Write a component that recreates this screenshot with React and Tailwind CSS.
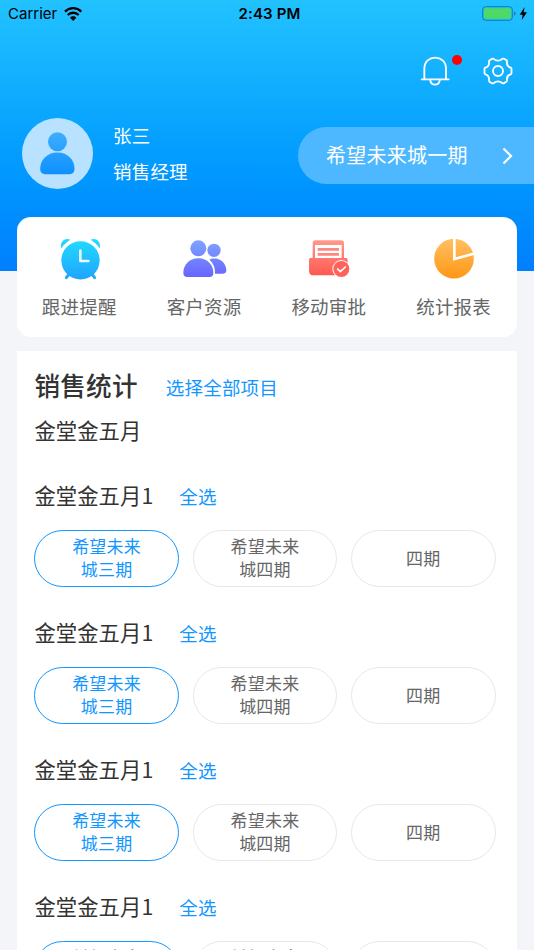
const shortcuts = [
  { key: 'remind', label: '跟进提醒', Icon: AlarmIcon },
  { key: 'customer', label: '客户资源', Icon: CustomerIcon },
  { key: 'approve', label: '移动审批', Icon: ApproveIcon },
  { key: 'report', label: '统计报表', Icon: ReportIcon },
]

const chips = [
  { id: 1, lines: ['希望未来', '城三期'], active: true },
  { id: 2, lines: ['希望未来', '城四期'] },
  { id: 3, lines: ['四期'] },
]

const groups = [1, 2, 3, 4].map((id) => ({ id, name: '金堂金五月1', chips }))

function AlarmIcon() {
  return (
    <svg className="h-[46px] w-12" viewBox="168 80 144 138">
      <defs>
        <linearGradient id="alarm" x1="0" y1="87" x2="0" y2="210" gradientUnits="userSpaceOnUse">
          <stop offset="0" stopColor="#22dcff" />
          <stop offset="1" stopColor="#20a4ff" />
        </linearGradient>
      </defs>
      <g fill="url(#alarm)">
        <path d="M184 116C179 98 194 83 211 91C203 96 191 105 186 115Z" />
        <path d="M299 116C304 98 289 83 272 91C280 96 292 105 297 115Z" />
        <circle cx="241.500" cy="153" r="57.500" />
      </g>
      <path d="M206 196L199 205M277 196L284 205" stroke="#20a8ff" strokeWidth="9" strokeLinecap="round" />
      <path d="M241 124V155H265" fill="none" stroke="#e8fbff" strokeWidth="8" strokeLinecap="round" strokeLinejoin="round" />
    </svg>
  )
}

function CustomerIcon() {
  return (
    <svg className="h-[46px] w-12" viewBox="542 80 144 138">
      <defs>
        <linearGradient id="customer" x1="0" y1="93" x2="0" y2="203" gradientUnits="userSpaceOnUse">
          <stop offset="0" stopColor="#7ea4ff" />
          <stop offset="1" stopColor="#6864ff" />
        </linearGradient>
      </defs>
      <g fill="url(#customer)">
        <circle cx="641" cy="123" r="20" />
        <path d="M627 151C634 147 645 147 653 149C669 154 678 169 678 183Q678 193 668 193H644C645 176 639 160 627 151Z" />
        <circle cx="594" cy="117" r="27" fill="#fff" />
        <circle cx="594" cy="117" r="24" />
        <path d="M594 147C622 147 639 168 639 190Q639 203 627 203H561Q549 203 549 190C549 168 566 147 594 147Z" />
      </g>
    </svg>
  )
}

function ApproveIcon() {
  return (
    <svg className="h-[46px] w-12" viewBox="115 80 144 138">
      <defs>
        <linearGradient id="approve" x1="0" y1="93" x2="0" y2="200" gradientUnits="userSpaceOnUse">
          <stop offset="0" stopColor="#ff998d" />
          <stop offset="1" stopColor="#ff574f" />
        </linearGradient>
      </defs>
      <path d="M138 147V101Q138 93 146 93H224Q232 93 232 101V147Z" fill="url(#approve)" />
      <path d="M145 147V107H225V147Z" fill="#fff" />
      <path d="M153 120H217M153 135H217" stroke="#ff877d" strokeWidth="8" />
      <path d="M131 146H239Q243 146 243 151V184Q243 198 229 198H141Q127 198 127 184V151Q127 146 131 146Z" fill="url(#approve)" />
      <circle cx="224" cy="179" r="27" fill="#fff" />
      <circle cx="224" cy="179" r="24" fill="#ff625a" />
      <path d="M213 179L221 187L236 173" fill="none" stroke="#fff" strokeWidth="5" strokeLinecap="round" strokeLinejoin="round" />
    </svg>
  )
}

function ReportIcon() {
  return (
    <svg className="h-[46px] w-12" viewBox="489.500 80 144 138">
      <defs>
        <linearGradient id="report" x1="0" y1="88" x2="0" y2="207" gradientUnits="userSpaceOnUse">
          <stop offset="0" stopColor="#ffc062" />
          <stop offset="1" stopColor="#ff9715" />
        </linearGradient>
      </defs>
      <circle cx="561.500" cy="148" r="59.500" fill="url(#report)" />
      <path d="M562.500 84V149L626 132" fill="none" stroke="#fff" strokeWidth="8" />
    </svg>
  )
}

function WifiIcon() {
  return (
    <svg className="h-[14px] w-[18px]" viewBox="194 18 54 42">
      <g fill="none" stroke="#000" strokeWidth="7">
        <path d="M197 32C211 18 232 18 246 32" />
        <path d="M205 42C214 33 229 33 238 42" />
      </g>
      <path d="M221.500 60L212 50C217 44.500 226 44.500 231 50Z" />
    </svg>
  )
}

function StatusBar() {
  return (
    <div className="grid h-7 grid-cols-3 items-center pr-[6px] pl-2 font-['Inter',sans-serif] text-black">
      <div className="flex items-center gap-[7px]">
        <span className="text-[15px]">Carrier</span>
        <WifiIcon />
      </div>
      <span className="pl-[3px] text-center text-[15px] font-semibold tracking-[0.15px]">2:43 PM</span>
      <div className="-mt-[2px] flex items-center justify-end">
        <svg className="h-[15px] w-[46px]" viewBox="645 17 138 45">
          <rect x="647" y="19" width="89" height="41" rx="9" fill="none" stroke="#157da8" strokeWidth="3" />
          <rect x="651" y="24" width="81" height="31" rx="5" fill="#4cd964" />
          <path d="M741 33Q746 35 746 39.500Q746 44 741 46Z" fill="#157da8" />
          <path d="M773 20L758 43H767L764 59L780 36H770Z" />
        </svg>
      </div>
    </div>
  )
}

function BellIcon() {
  return (
    <svg className="h-[30px] w-[30px]" viewBox="460 168 90 90" fill="none" stroke="#fff" strokeWidth="5.500" strokeLinecap="round">
      <path d="M473 237V206C473 162 538 162 538 206V237" />
      <path d="M465 238H546" />
      <path d="M491 241C493 258 517 258 519 241" />
    </svg>
  )
}

function GearIcon() {
  return (
    <svg className="h-[30px] w-[30px]" viewBox="648 168 90 90" fill="none" stroke="#fff" strokeWidth="5.500" strokeLinejoin="round">
      <path d="M680 176.500Q686 182 693 182Q700 182 706 176.500Q708.500 175 711 176.500L718 180.500Q720.500 182 720 185C719 194 723 201 731 203Q733.500 204 733.500 207V219Q733.500 222 731 223C723 225 719 232 720 241Q720.500 244 718 245.500L711 249.500Q708.500 251 706 249.500Q700 244 693 244Q686 244 680 249.500Q677.500 251 675 249.500L668 245.500Q665.500 244 666 241C667 232 663 225 655 223Q652.500 222 652.500 219V207Q652.500 204 655 203C663 201 667 194 666 185Q665.500 182 668 180.500L675 176.500Q677.500 175 680 176.500Z" />
      <circle cx="693" cy="213" r="15" />
    </svg>
  )
}

function Avatar() {
  return (
    <svg className="h-[71px] w-[71px] shrink-0" viewBox="65.500 353.500 213 213">
      <defs>
        <linearGradient id="avatar" x1="0" y1="396" x2="0" y2="522" gradientUnits="userSpaceOnUse">
          <stop offset="0" stopColor="#3fadff" />
          <stop offset="1" stopColor="#0d91ff" />
        </linearGradient>
      </defs>
      <circle cx="172" cy="460" r="106.500" fill="#b8e2ff" />
      <g fill="url(#avatar)">
        <circle cx="172" cy="424.500" r="28.500" />
        <path d="M172 457C204 457 223 480 223 506Q223 522 208 522H135Q120 522 120 506C120 480 140 457 172 457Z" />
      </g>
    </svg>
  )
}

function Header() {
  return (
    <header className="h-[271px] bg-linear-to-b from-[#22c2ff] to-[#007fff]">
      <StatusBar />
      <div className="flex justify-end gap-[33px] pt-7 pr-[21px]">
        <div className="relative">
          <BellIcon />
          <span className="absolute -top-[1px] -right-[12px] size-[10px] rounded-full bg-[#ff0000]" />
        </div>
        <GearIcon />
      </div>
      <div className="mt-8 flex items-center pl-[22px] text-white">
        <Avatar />
        <div className="-mt-[1px] ml-[20px] text-[18.500px] leading-9 tracking-[0.2px]">
          <p>张三</p>
          <p>销售经理</p>
        </div>
        <div className="mt-[4px] ml-auto flex h-[57px] w-[236px] items-center rounded-l-full bg-[#4db8ff] pr-[21px] pl-7">
          <span className="pb-[2px] text-[20px] tracking-[0.240px]">希望未来城一期</span>
          <svg className="ml-auto h-[18px] w-[11px]" viewBox="0 0 11 18" fill="none" stroke="#fff" strokeWidth="2.200">
            <path d="M1.500 1.500L9 9L1.500 16.500" />
          </svg>
        </div>
      </div>
    </header>
  )
}

function Chip({ lines, active }) {
  return (
    <button
      className={`flex h-[57px] flex-col items-center justify-center rounded-full border text-[17px] leading-[23px] tracking-[0.2px] ${
        lines.length > 1 ? 'pb-[4px]' : 'pb-[2px]'
      } ${active ? 'border-[#1296ff] text-[#1296ff]' : 'border-[#e8e8e8] text-[#666]'}`}
    >
      {lines.map((line) => <span key={line}>{line}</span>)}
    </button>
  )
}

export default function App() {
  return (
    <div className="h-[950px] overflow-hidden bg-[#f3f5f8] font-['Noto_Sans_CJK_SC',sans-serif]">
      <Header />

      <main className="relative -mt-[54px] pr-[17.500px] pl-[17.400px]">
        <nav className="grid h-[120px] grid-cols-4 rounded-[14px] bg-white pt-[19px]">
          {shortcuts.map(({ key, label, Icon }) => (
            <div key={key} className="flex flex-col items-center">
              <Icon />
              <span className="mt-[10px] -ml-[1px] text-[18.500px] leading-7 tracking-[0.2px] text-[#666]">{label}</span>
            </div>
          ))}
        </nav>

        <section className="mt-[14px] bg-white px-[17px] pt-[14px]">
          <div className="flex h-10 items-center">
            <h1 className="text-[25.600px] font-medium tracking-[0.250px] text-[#333]">销售统计</h1>
            <button className="mt-[5px] ml-7 text-[18.500px] tracking-[0.2px] text-[#1296ff]">选择全部项目</button>
          </div>
          <p className="mt-[9px] text-[21.300px] leading-8 tracking-[0.1px] text-[#333]">金堂金五月</p>

          <div className="mt-[33px]">
            {groups.map((group) => (
              <div key={group.id} className="h-[137px]">
                <div className="flex h-8 items-center">
                  <h2 className="text-[21.300px] tracking-[0.1px] text-[#333]">{group.name}</h2>
                  <button className="mt-[4px] ml-[26px] text-[18.500px] tracking-[0.1px] text-[#1296ff]">全选</button>
                </div>
                <div className="mt-[19px] mr-[4px] grid grid-cols-3 gap-[14px]">
                  {group.chips.map((chip) => <Chip key={chip.id} {...chip} />)}
                </div>
              </div>
            ))}
          </div>
        </section>
      </main>
    </div>
  )
}
